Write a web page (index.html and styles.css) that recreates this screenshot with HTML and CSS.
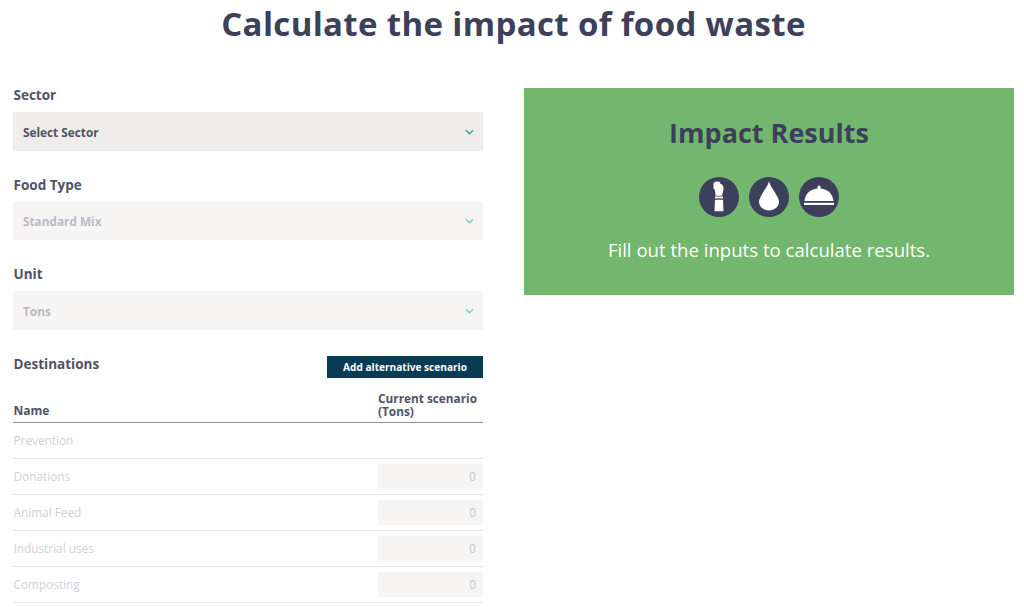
FILE: index.html
```html
<!DOCTYPE html>
<html lang="en">
<head>
<meta charset="utf-8">
<title>Calculate the impact of food waste</title>
<link rel="stylesheet" href="styles.css">
</head>
<body>
<h1 class="title">Calculate the impact of food waste</h1>
<main class="layout">
  <section class="form">
    <div class="field">
      <div class="label">Sector</div>
      <div class="select active"><span>Select Sector</span>
        <svg class="chev" viewBox="0 0 10 6"><path d="M1 1l4 4 4-4"/></svg></div>
    </div>
    <div class="field">
      <div class="label">Food Type</div>
      <div class="select disabled short"><span>Standard Mix</span>
        <svg class="chev" viewBox="0 0 10 6"><path d="M1 1l4 4 4-4"/></svg></div>
    </div>
    <div class="field">
      <div class="label">Unit</div>
      <div class="select disabled"><span>Tons</span>
        <svg class="chev" viewBox="0 0 10 6"><path d="M1 1l4 4 4-4"/></svg></div>
    </div>
    <div class="dest-head">
      <div class="label">Destinations</div>
      <button class="add">Add alternative scenario</button>
    </div>
    <div class="thead">
      <div class="th th-name">Name</div>
      <div class="th th-value">Current scenario (Tons)</div>
    </div>
    <div class="row"><span>Prevention</span></div>
    <div class="row"><span>Donations</span><div class="num">0</div></div>
    <div class="row"><span>Animal Feed</span><div class="num">0</div></div>
    <div class="row"><span>Industrial uses</span><div class="num">0</div></div>
    <div class="row"><span>Composting</span><div class="num">0</div></div>
  </section>
  <aside class="results">
    <h2 class="results-title">Impact Results</h2>
    <div class="icons">
      <svg class="icon" viewBox="0 0 40 40"><circle cx="20" cy="20" r="20" fill="#3d405b"/><path fill="#fff" d="M14.500 6C15.500 4.500 19 4 21 5l.5 2c2 .5 3 2 3 4 0 3-1 5-1.500 7.700h-6.500c0-2.700 0-3.700-1-6.200-1-1-1.500-2-1-3z"/><path fill="#fff" d="M16 19.500h8v1.900h-8z"/><path fill="#fff" d="M16 22.800h8l.5 11.500h-9z"/></svg>
      <svg class="icon" viewBox="0 0 40 40"><circle cx="20" cy="20" r="20" fill="#3d405b"/><path fill="#fff" d="M20 4.500c1.500 4.500 4 7.500 6.300 11.500 1.900 3.300 3.700 6.300 3.700 8.500 0 5.300-4.600 9-10 9s-10-3.700-10-9c0-2.200 1.800-5.200 3.700-8.500C16 12 18.500 9 20 4.500z"/></svg>
      <svg class="icon" viewBox="0 0 40 40"><circle cx="20" cy="20" r="20" fill="#3d405b"/><path fill="#fff" d="M18.500 10a1.500 1.500 0 1 1 3 0v1.500c7 .5 12.500 5.500 13 12.500H5.500C6 17 11.500 12 18.500 11.500z"/><path fill="#fff" d="M5 25.800h30V28H5z"/></svg>
    </div>
    <p class="hint">Fill out the inputs to calculate results.</p>
  </aside>
</main>
</body>
</html>
```
FILE: styles.css
```css
* { box-sizing: border-box; }
html, body { margin: 0; height: 607px; overflow: hidden; background: #fff; }
body { font-family: "Open Sans", "Liberation Sans", sans-serif; color: #3d405b; }
.title { margin: 0; height: 88px; padding: 1px 0 0 3px; text-align: center; font-size: 33px; line-height: 46px; font-weight: 700; letter-spacing: 0.35px; }
.layout { display: flex; align-items: flex-start; padding: 0 10px 0 13px; gap: 41px; }
.form { width: 470px; flex: none; }
.results { width: 490px; height: 207px; flex: none; background: #72b76d; text-align: center; padding-top: 27px; }
.results-title { margin: 0; font-size: 27px; line-height: 36px; font-weight: 700; }
.icons { display: flex; justify-content: center; gap: 10px; margin-top: 26px; }
.icon { width: 40px; height: 40px; display: block; }
.hint { margin: 20px 0 0; color: #fff; font-size: 18.600px; line-height: 26px; }
.field { height: 89.600px; }
.label { font-size: 13.500px; line-height: 14px; font-weight: 700; color: #4f5268; padding-left: 0.5px; }
.field .label { height: 24px; }
.select { height: 39px; display: flex; align-items: center; justify-content: space-between; padding: 1px 10px 0; font-size: 11.800px; font-weight: 700; }
.select.short { height: 38px; }
.select.active { background: #eeedeb; color: #4f5268; }
.select.disabled { background: #f6f5f3; color: #b9bac5; }
.chev { width: 9px; height: 6px; fill: none; stroke: #2a9d8f; stroke-width: 1.500; margin-right: -1px; }
.disabled .chev { opacity: .55; }
.dest-head { display: flex; justify-content: space-between; align-items: flex-start; height: 30px; margin-top: -0.800px; }
.dest-head .label { padding-top: 1px; }
.add { width: 156px; height: 22px; border: 0; background: #0a3b55; color: #fff; font: 700 10.100px "Open Sans", "Liberation Sans", sans-serif; padding: 0; }
.thead { display: flex; justify-content: space-between; align-items: flex-end; border-bottom: 1px solid #8f90a3; padding: 0 0 4px 0.5px; margin-top: 6px; }
.th { font-size: 12px; line-height: 13px; font-weight: 700; color: #4f5268; }
.th-name { padding-bottom: 1px; }
.th-value { width: 105px; font-size: 11.800px; }
.row { display: flex; justify-content: space-between; align-items: center; height: 36px; border-bottom: 1px solid #e6e6e6; font-size: 11.800px; color: #cfd0d6; padding: 0 0 1px 0.500px; }
.num { width: 105px; height: 25px; margin-top: 2px; background: #f6f5f3; color: #c4c5cd; text-align: right; padding-right: 7px; line-height: 25px; }
```
